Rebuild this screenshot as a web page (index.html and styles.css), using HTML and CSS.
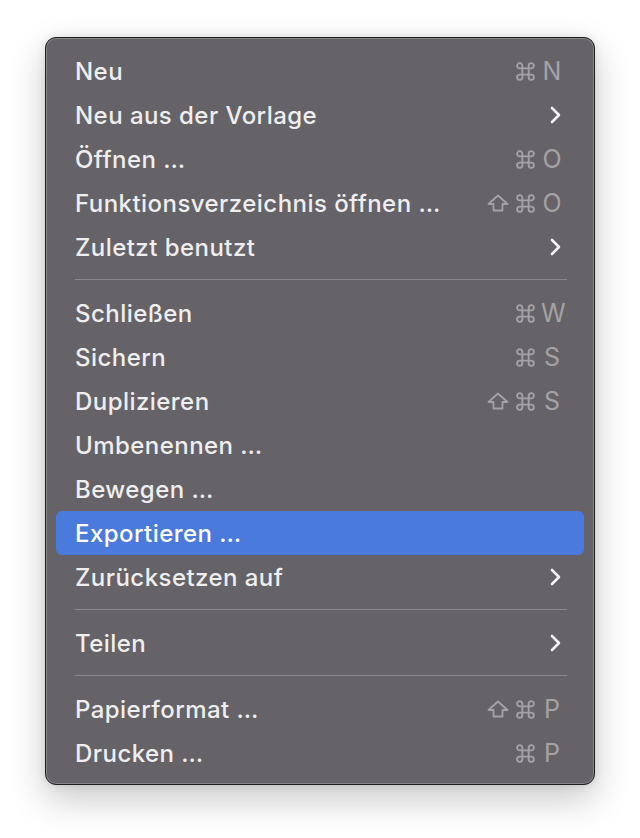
FILE: index.html
```html
<!DOCTYPE html>
<html lang="de">
<head>
<meta charset="utf-8">
<title>Ablage</title>
<link rel="stylesheet" href="styles.css">
</head>
<body>
<svg width="0" height="0" class="defs">
  <defs>
    <symbol id="cmd" viewBox="0 0 20 20"><path d="M7 7 V4.5 A2.5 2.5 0 1 0 4.5 7 H15.5 A2.5 2.5 0 1 0 13 4.5 V15.5 A2.5 2.5 0 1 0 15.5 13 H4.5 A2.5 2.5 0 1 0 7 15.5 Z" fill="none" stroke="currentColor" stroke-width="1.8" stroke-linejoin="round"/></symbol>
    <symbol id="shift" viewBox="0 0 22 18"><path d="M11 1.5 L20.5 10 H15.5 V16.5 H6.5 V10 H1.5 Z" fill="none" stroke="currentColor" stroke-width="1.8" stroke-linejoin="round"/></symbol>
    <symbol id="chev" viewBox="0 0 11 18"><path d="M2 2 L9 9 L2 16" fill="none" stroke="currentColor" stroke-width="2.6" stroke-linecap="round" stroke-linejoin="round"/></symbol>
  </defs>
</svg>
<div class="menu">
  <div class="item"><span class="label">Neu</span><span class="keys"><svg class="k-cmd"><use href="#cmd"/></svg><span class="key">N</span></span></div>
  <div class="item"><span class="label">Neu aus der Vorlage</span><svg class="chev"><use href="#chev"/></svg></div>
  <div class="item"><span class="label">Öffnen …</span><span class="keys"><svg class="k-cmd"><use href="#cmd"/></svg><span class="key">O</span></span></div>
  <div class="item"><span class="label">Funktionsverzeichnis öffnen …</span><span class="keys"><svg class="k-shift"><use href="#shift"/></svg><svg class="k-cmd"><use href="#cmd"/></svg><span class="key">O</span></span></div>
  <div class="item"><span class="label">Zuletzt benutzt</span><svg class="chev"><use href="#chev"/></svg></div>
  <div class="sep"></div>
  <div class="item"><span class="label">Schließen</span><span class="keys"><svg class="k-cmd"><use href="#cmd"/></svg><span class="key">W</span></span></div>
  <div class="item"><span class="label">Sichern</span><span class="keys"><svg class="k-cmd"><use href="#cmd"/></svg><span class="key">S</span></span></div>
  <div class="item"><span class="label">Duplizieren</span><span class="keys"><svg class="k-shift"><use href="#shift"/></svg><svg class="k-cmd"><use href="#cmd"/></svg><span class="key">S</span></span></div>
  <div class="item"><span class="label">Umbenennen …</span></div>
  <div class="item"><span class="label">Bewegen …</span></div>
  <div class="item selected"><span class="label">Exportieren …</span></div>
  <div class="item"><span class="label">Zurücksetzen auf</span><svg class="chev"><use href="#chev"/></svg></div>
  <div class="sep"></div>
  <div class="item"><span class="label">Teilen</span><svg class="chev"><use href="#chev"/></svg></div>
  <div class="sep"></div>
  <div class="item"><span class="label">Papierformat …</span><span class="keys"><svg class="k-shift"><use href="#shift"/></svg><svg class="k-cmd"><use href="#cmd"/></svg><span class="key">P</span></span></div>
  <div class="item"><span class="label">Drucken …</span><span class="keys"><svg class="k-cmd"><use href="#cmd"/></svg><span class="key">P</span></span></div>
</div>
</body>
</html>
```
FILE: styles.css
```css
html, body {
  margin: 0;
  padding: 0;
  background: #ffffff;
}
body {
  box-sizing: border-box;
  min-height: 838px;
  padding: 37px 0 0 45px;
  font-family: Inter, "Noto Sans", sans-serif;
}
.defs {
  position: absolute;
  width: 0;
  height: 0;
}
.menu {
  width: 550px;
  box-sizing: border-box;
  background: #656367;
  border: 1px solid #1f1f20;
  border-radius: 11px;
  padding: 11px 10px 9px;
  box-shadow: inset 0 0 0 1px rgba(255, 255, 255, 0.22), 0 14px 36px rgba(0, 0, 0, 0.22), 0 0 8px rgba(0, 0, 0, 0.1);
}
.item {
  height: 44px;
  display: flex;
  align-items: center;
  padding: 0 21px 0 19px;
  border-radius: 6px;
  color: #efeeef;
  font-size: 24px;
  font-weight: 500;
  letter-spacing: 0.45px;
}
.item.selected {
  background: #4a7bdc;
  color: #ffffff;
}
.label {
  flex: 1;
  white-space: nowrap;
}
.keys {
  display: flex;
  align-items: center;
  color: #a4a2a5;
}
.k-shift {
  width: 22px;
  height: 18px;
  margin-right: 6px;
}
.k-cmd {
  width: 21px;
  height: 21px;
}
.key {
  width: 22px;
  margin-left: 5px;
  text-align: center;
  font-size: 25px;
  font-weight: 400;
  letter-spacing: 0;
}
.chev {
  width: 11px;
  height: 18px;
  color: #f4f4f4;
  margin-right: 2px;
}
.sep {
  height: 1px;
  margin: 10px 17px 11px 19px;
  background: #8a888c;
}
```
